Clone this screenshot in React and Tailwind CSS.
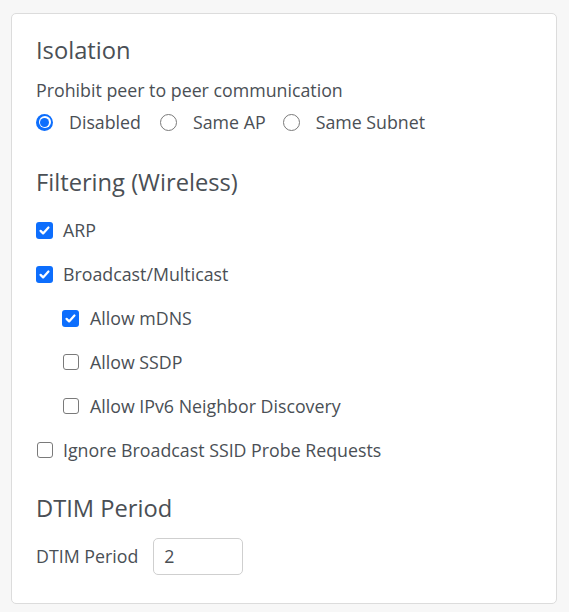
import React from "react";

const Check = ({ checked }) =>
  checked ? (
    <span className="flex h-[17px] w-[17px] shrink-0 items-center justify-center rounded-[3px] bg-[#0d6efd]">
      <svg viewBox="0 0 16 16" className="h-[15px] w-[15px]">
        <path d="M3.8 8.4l2.7 2.7L12.2 4.8" fill="none" stroke="#fff" strokeWidth="2.4" strokeLinecap="round" strokeLinejoin="round" />
      </svg>
    </span>
  ) : (
    <span className="block h-[16px] w-[16px] shrink-0 rounded-[3px] border border-[#7a7a7a] bg-white" />
  );

const Radio = ({ checked }) =>
  checked ? (
    <span className="flex h-[17px] w-[17px] shrink-0 items-center justify-center rounded-full bg-[#0d6efd]">
      <span className="flex h-[12px] w-[12px] items-center justify-center rounded-full bg-white">
        <span className="h-[9px] w-[9px] rounded-full bg-[#0d6efd]" />
      </span>
    </span>
  ) : (
    <span className="block h-[17px] w-[17px] shrink-0 rounded-full border border-[#7a7a7a] bg-white" />
  );

const CheckRow = ({ checked, label, indent }) => (
  <div className={`flex h-[44px] items-center ${indent ? "pl-[26px]" : ""}`}>
    <span className="flex w-[17px] justify-center">
      <Check checked={checked} />
    </span>
    <span className={indent ? "ml-[11px]" : "ml-[10px]"}>{label}</span>
  </div>
);

export default function App() {
  return (
    <div
      className="min-h-[612px] bg-[#f7f7f7] pl-[11px] pr-[12px] pt-[13px] pb-[8px] text-[17.8px] text-[#4a4f55]"
      style={{ fontFamily: "'Open Sans', sans-serif" }}
    >
      <div className="h-[591px] rounded-[5px] border border-[#dcdcdc] bg-white pl-[24px] pt-[21px]">
        <h2 className="text-[23.7px] leading-[30px]">Isolation</h2>
        <div className="mt-[13px] leading-[24px]">Prohibit peer to peer communication</div>
        <div className="mt-[7px] flex h-[26px] items-center">
          <Radio checked />
          <span className="ml-[16px]">Disabled</span>
          <span className="ml-[19px] flex"><Radio /></span>
          <span className="ml-[16px]">Same AP</span>
          <span className="ml-[17px] flex"><Radio /></span>
          <span className="ml-[16px]">Same Subnet</span>
        </div>
        <h2 className="mt-[32px] text-[23.7px] leading-[30px]">Filtering (Wireless)</h2>
        <div className="mt-[11px]">
          <CheckRow checked label="ARP" />
          <CheckRow checked label="Broadcast/Multicast" />
          <CheckRow checked label="Allow mDNS" indent />
          <CheckRow label="Allow SSDP" indent />
          <CheckRow label="Allow IPv6 Neighbor Discovery" indent />
          <CheckRow label="Ignore Broadcast SSID Probe Requests" />
        </div>
        <h2 className="mt-[21px] text-[23.7px] leading-[30px]">DTIM Period</h2>
        <div className="mt-[15px] flex items-center">
          <span>DTIM Period</span>
          <div className="ml-[15px] flex h-[37px] w-[90px] items-center rounded-[5px] border border-[#cfcfcf] pl-[10px]">
            2
          </div>
        </div>
      </div>
    </div>
  );
}
